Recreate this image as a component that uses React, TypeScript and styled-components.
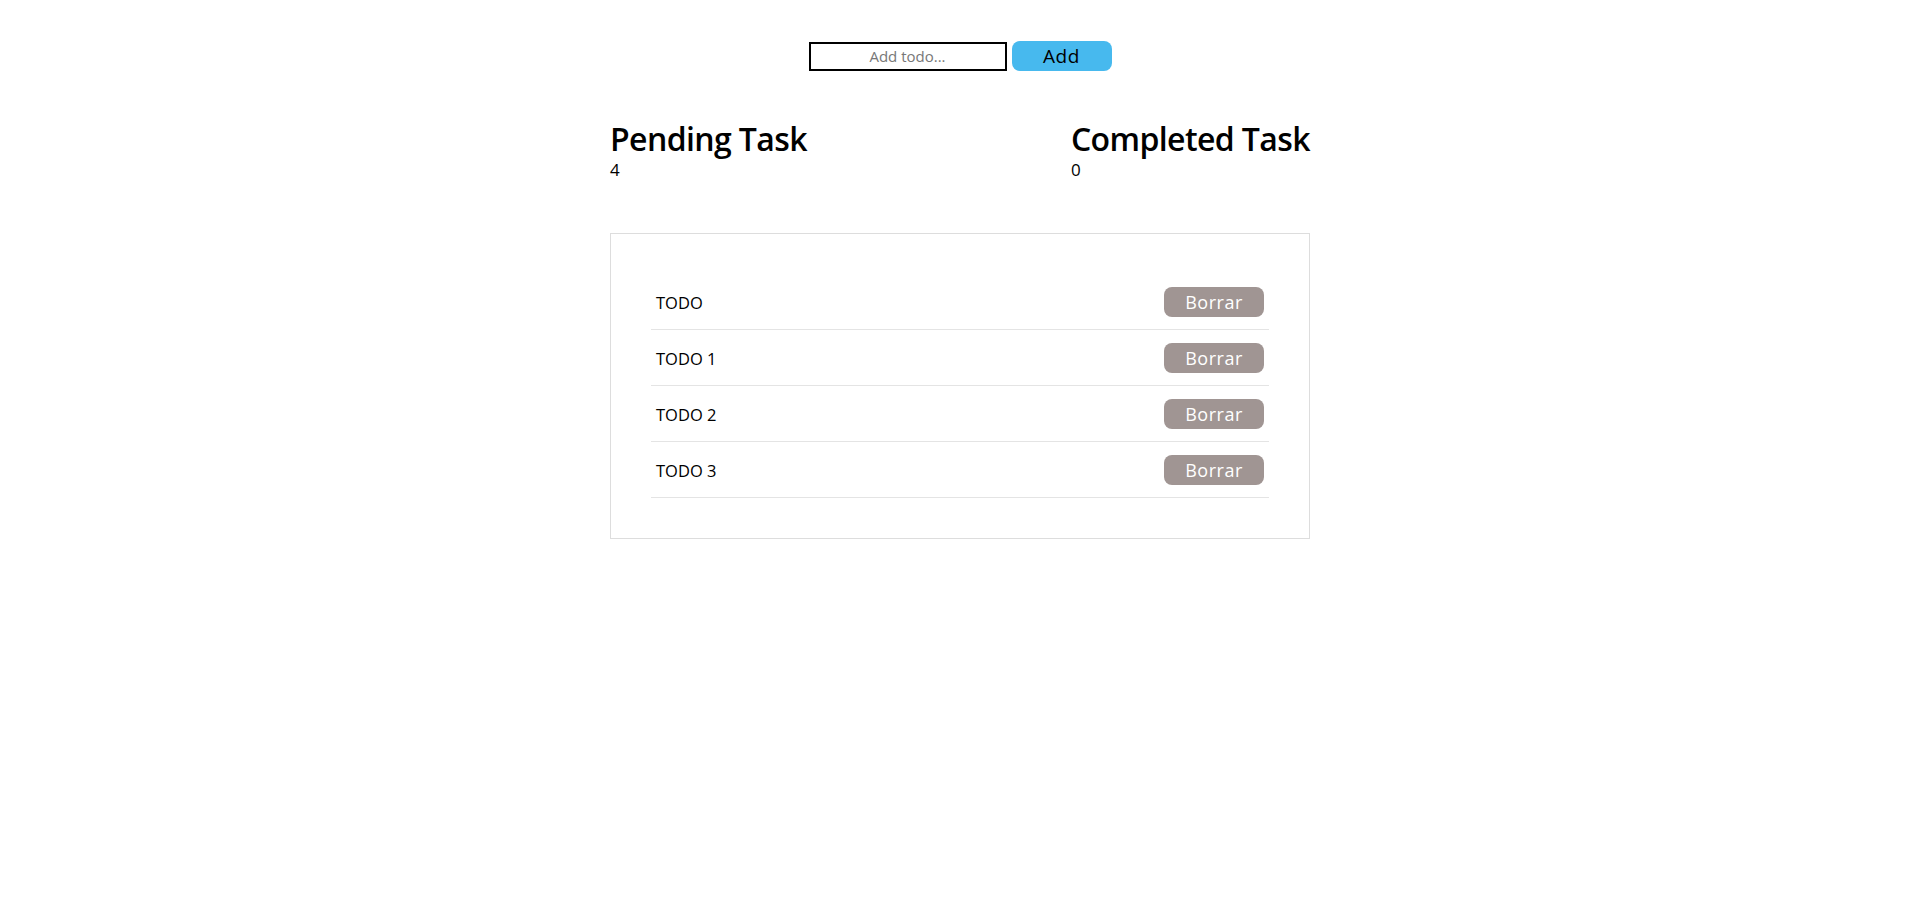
import { FormEvent, useState } from 'react';
import styled, { createGlobalStyle } from 'styled-components';

const GlobalStyle = createGlobalStyle`
  html, body {
    margin: 0;
    padding: 0;
    background-color: #fff;
  }

  body {
    font-family: 'Open Sans', 'Noto Sans', sans-serif;
    color: #000;
  }

  * {
    box-sizing: border-box;
  }
`;

const Page = styled.main`
  width: 700px;
  margin: 0 auto;
  padding-top: 41px;
`;

const Form = styled.form`
  display: flex;
  align-items: center;
  justify-content: center;
  gap: 5px;
  height: 30px;
`;

const Input = styled.input`
  width: 198px;
  height: 29px;
  border: 2px solid #000;
  padding: 0 6px;
  font-family: inherit;
  font-size: 15px;
  text-align: center;
  outline: none;

  &::placeholder {
    color: #777;
  }
`;

const Button = styled.button<{ $bg: string; $color: string; $size: number }>`
  width: 100px;
  height: 30px;
  border: none;
  border-radius: 8px;
  padding: 0;
  background-color: ${(p) => p.$bg};
  color: ${(p) => p.$color};
  font-family: inherit;
  font-size: ${(p) => p.$size}px;
  letter-spacing: 0.5px;
  line-height: 30px;
  cursor: pointer;
`;

const Stats = styled.section`
  display: flex;
  justify-content: space-between;
  margin-top: 48px;
`;

const Stat = styled.div`
  display: flex;
  flex-direction: column;
`;

const StatTitle = styled.h2`
  margin: 0;
  font-size: 32px;
  font-weight: 600;
  line-height: 40px;
  letter-spacing: -0.6px;
`;

const StatValue = styled.span`
  font-size: 17px;
  line-height: 22px;
`;

const Card = styled.ul`
  list-style: none;
  margin: 52px 0 0;
  padding: 40px;
  border: 1px solid #ddd;
`;

const Row = styled.li`
  display: flex;
  align-items: center;
  justify-content: space-between;
  height: 56px;
  padding: 1px 5px 0;
  border-bottom: 1px solid #e4e4e4;
  font-size: 16.5px;
`;

type Todo = { id: number; text: string; done: boolean };

const initial: Todo[] = [
  { id: 0, text: 'TODO', done: false },
  { id: 1, text: 'TODO 1', done: false },
  { id: 2, text: 'TODO 2', done: false },
  { id: 3, text: 'TODO 3', done: false },
];

export default function App() {
  const [todos, setTodos] = useState<Todo[]>(initial);
  const [text, setText] = useState('');

  function submitHandler(e: FormEvent) {
    e.preventDefault();
    if (!text.trim()) return;
    setTodos([...todos, { id: Date.now(), text, done: false }]);
    setText('');
  }

  function remove(id: number) {
    setTodos(todos.filter((t) => t.id !== id));
  }

  const pending = todos.filter((t) => !t.done).length;
  const completed = todos.length - pending;

  return (
    <>
      <GlobalStyle />
      <Page>
        <Form onSubmit={submitHandler}>
          <Input
            placeholder="Add todo..."
            value={text}
            onChange={(e) => setText(e.target.value)}
          />
          <Button $bg="#47b9ee" $color="#000" $size={19} type="submit">
            Add
          </Button>
        </Form>
        <Stats>
          <Stat>
            <StatTitle>Pending Task</StatTitle>
            <StatValue>{pending}</StatValue>
          </Stat>
          <Stat>
            <StatTitle>Completed Task</StatTitle>
            <StatValue>{completed}</StatValue>
          </Stat>
        </Stats>
        <Card>
          {todos.map((todo) => (
            <Row key={todo.id}>
              <span>{todo.text}</span>
              <Button
                $bg="#a09593"
                $color="#fff"
                $size={18}
                type="button"
                onClick={() => remove(todo.id)}
              >
                Borrar
              </Button>
            </Row>
          ))}
        </Card>
      </Page>
    </>
  );
}
